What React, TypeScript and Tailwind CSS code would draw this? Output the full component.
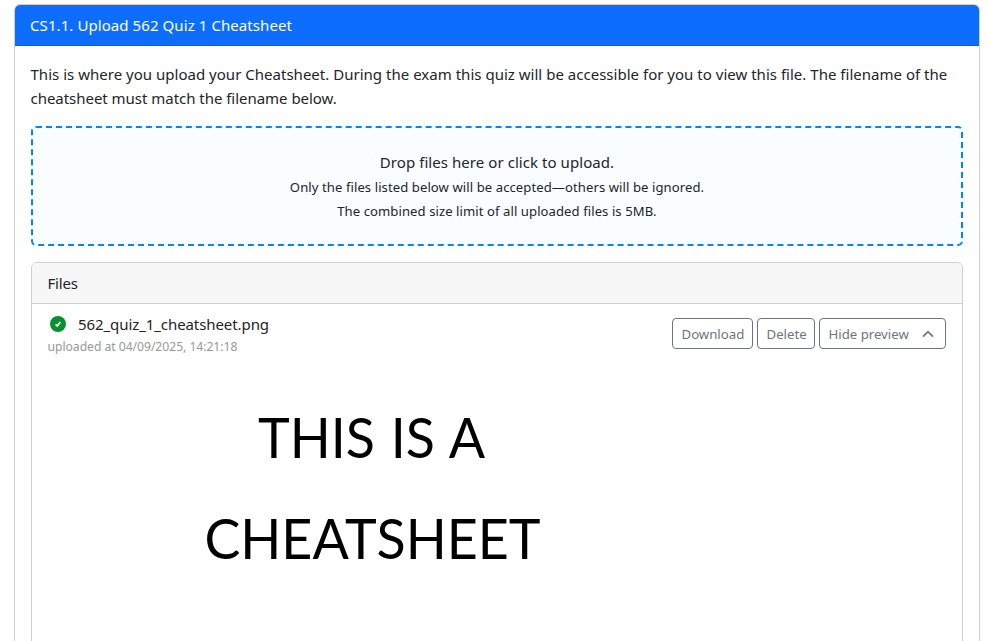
import React from "react";

const outlineButton =
  "flex h-[31px] items-center rounded-[4px] border border-[#6c757d] bg-white pl-[8.5px] pt-px text-[13.2px] leading-[21px] text-[#6c757d] whitespace-nowrap";

export default function App() {
  return (
    <div className="h-[641px] overflow-hidden bg-white pl-[14px] pt-[4px] font-['Noto_Sans','Open_Sans',sans-serif] text-[15px] leading-6 text-[#212529]">
      <section className="h-[700px] w-[966px] rounded-md border border-[#cfcfcf]">
        <header className="h-[41px] rounded-t-[5px] border-b border-[#0b5cd8] bg-[#0d6efd] px-[15px] pt-2 tracking-[0.08px] text-white">
          CS1.1. Upload 562 Quiz 1 Cheatsheet
        </header>
        <div className="px-[16px] pt-4">
          <p className="-ml-[0.5px] whitespace-nowrap tracking-[0.017px]">
            This is where you upload your Cheatsheet. During the exam this quiz will be accessible for you to view this file. The filename of the
            <br />
            <span className="tracking-[-0.03px]">cheatsheet must match the filename below.</span>
          </p>
          <button className="mt-4 flex h-[120px] w-[932px] flex-col items-center justify-center rounded-[5px] border-2 border-dashed border-[#0087f7] bg-[#f9fdff]">
            <span className="leading-6 tracking-[0.06px]">Drop files here or click to upload.</span>
            <small className="pt-px text-[13.1px] leading-6 tracking-[0.075px]">Only the files listed below will be accepted—others will be ignored.</small>
            <small className="-mb-px text-[13.1px] leading-6 tracking-[0.07px]">The combined size limit of all uploaded files is 5MB.</small>
          </button>
          <section className="mt-4 h-[500px] w-[932px] rounded-md border border-[#cfcfcf]">
            <header className="h-[41px] rounded-t-[5px] border-b border-[#cfcfcf] bg-[#f7f7f7] pl-[15.5px] pt-2 tracking-[-0.2px]">Files</header>
            <div className="flex items-start justify-between pl-4 pr-4 pt-2">
              <div>
                <div className="flex items-center">
                  <svg width="16" height="16" viewBox="0 0 16 16" className="ml-[2px] mr-[12px]">
                    <circle cx="8" cy="8" r="8" fill="#08912f" />
                    <path d="M5.6 8.3 7.3 10l3.1-4.1" fill="none" stroke="#fff" strokeWidth="1.7" />
                  </svg>
                  <span className="tracking-[-0.08px]">562_quiz_1_cheatsheet.png</span>
                </div>
                <div className="-ml-[0.5px] pt-px text-[12.2px] leading-[20px] tracking-[-0.05px] text-[#999]">uploaded at 04/09/2025, 14:21:18</div>
              </div>
              <div className="mt-[6px] flex gap-1">
                <button className={`${outlineButton} w-[81px]`}>Download</button>
                <button className={`${outlineButton} w-[58px]`}>Delete</button>
                <button className={`${outlineButton} w-[127px]`}>
                  Hide preview
                  <svg width="12" height="8" viewBox="0 0 12 8" className="mb-px ml-[13px]">
                    <path d="m1 6.7 5-5 5 5" fill="none" stroke="#6c757d" strokeWidth="1.7" />
                  </svg>
                </button>
              </div>
            </div>
            <div className="mt-[29px] w-[681px] scale-x-[0.943] text-center font-['Lato',sans-serif] text-[57px] leading-[101px] text-black">
              <div className="pr-[2px] [word-spacing:2px]">THIS IS A</div>
              <div>CHEATSHEET</div>
            </div>
          </section>
        </div>
      </section>
    </div>
  );
}
